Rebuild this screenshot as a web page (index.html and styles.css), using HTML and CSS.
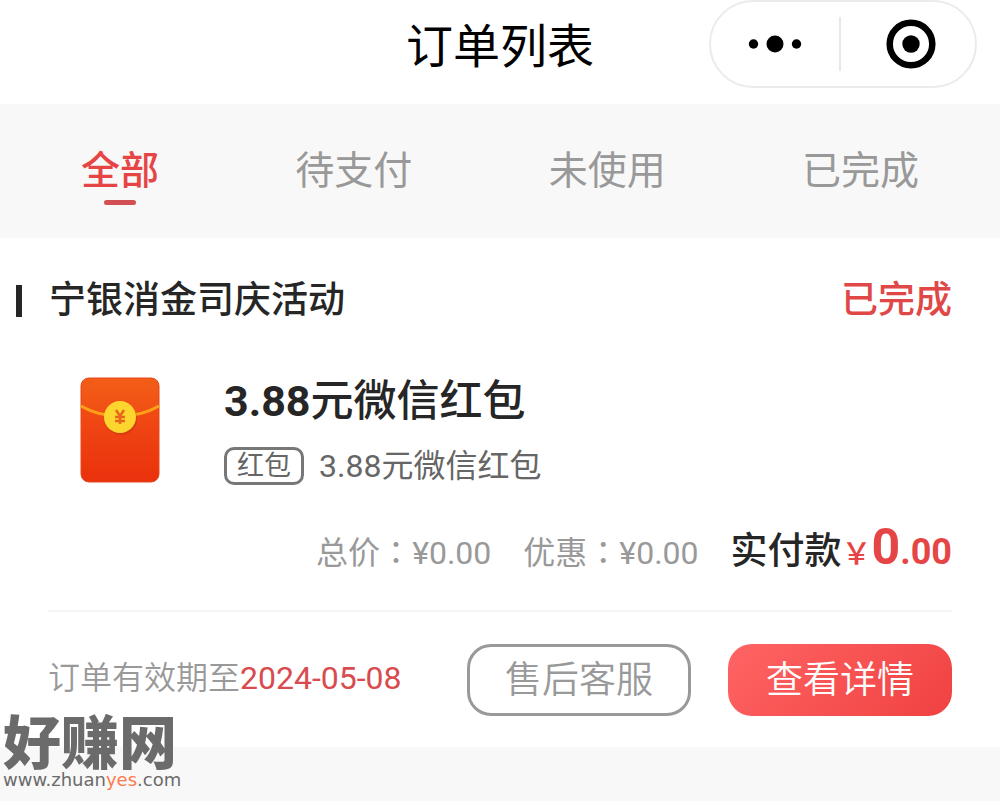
FILE: index.html
```html
<!DOCTYPE html>
<html lang="zh-CN">
<head>
<meta charset="utf-8">
<meta name="viewport" content="width=device-width, initial-scale=1">
<title>订单列表</title>
<link rel="stylesheet" href="styles.css">
</head>
<body>
<header class="topbar">
  <h1 class="topbar-title">订单列表</h1>
  <div class="capsule">
    <button class="capsule-btn capsule-more" type="button" aria-label="更多">
      <svg width="56" height="20" viewBox="0 0 56 20"><circle cx="6.500" cy="10" r="4.700"/><circle cx="28" cy="10" r="8.500"/><circle cx="49.500" cy="10" r="4.700"/></svg>
    </button>
    <button class="capsule-btn capsule-close" type="button" aria-label="关闭">
      <svg width="50" height="50" viewBox="0 0 50 50"><circle cx="25" cy="25" r="21.300" fill="none" stroke="#000" stroke-width="6.500"/><circle cx="25" cy="25" r="8.700"/></svg>
    </button>
  </div>
</header>

<nav class="tabs">
  <button class="tab tab-active" type="button">全部</button>
  <button class="tab" type="button">待支付</button>
  <button class="tab" type="button">未使用</button>
  <button class="tab" type="button">已完成</button>
</nav>

<main>
  <article class="order">
    <div class="order-head">
      <h2 class="order-title">宁银消金司庆活动</h2>
      <span class="order-status">已完成</span>
    </div>

    <div class="product">
      <svg class="product-pic" width="80" height="106" viewBox="0 0 80 106" aria-hidden="true">
        <defs>
          <linearGradient id="packet" x1="0" y1="0" x2="0" y2="1"><stop offset="0" stop-color="#f45a14"/><stop offset="0.500" stop-color="#ef4313"/><stop offset="1" stop-color="#ea310c"/></linearGradient>
          <linearGradient id="flap" x1="0" y1="0" x2="0" y2="1"><stop offset="0" stop-color="#f35d17"/><stop offset="1" stop-color="#f04e14"/></linearGradient>
        </defs>
        <rect x="1" y="1" width="78" height="104" rx="8" fill="url(#packet)" stroke="#e5481d"/>
        <path d="M9 2H71Q78 2 78 9V29Q61 38 40 38T2 29V9Q2 2 9 2Z" fill="url(#flap)"/>
        <path d="M1 29Q18 39 40 39T79 29" fill="none" stroke="#fda218" stroke-width="3"/>
        <circle cx="41" cy="42" r="16" fill="#bd3510" opacity="0.500"/>
        <circle cx="40" cy="40" r="16" fill="#fdd52f"/>
        <path d="M36 33L40 39L44 33M40 39V47M35 40H45M35 44H45" fill="none" stroke="#e7681b" stroke-width="2.500"/>
      </svg>
      <div class="product-info">
        <h3 class="product-name"><span class="amount">3.88</span>元微信红包</h3>
        <p class="product-desc"><span class="tag">红包</span><span>3.88元微信红包</span></p>
      </div>
    </div>

    <div class="totals">
      <span class="sum">总价<span class="colon" lang="zh-TW">：</span>¥0.00</span>
      <span class="sum">优惠<span class="colon" lang="zh-TW">：</span>¥0.00</span>
      <span class="paid">实付款<span class="paid-sign">￥</span><strong class="paid-int">0</strong><strong class="paid-dec">.00</strong></span>
    </div>

    <footer class="order-foot">
      <p class="expiry">订单有效期至<time class="expiry-date" datetime="2024-05-08">2024-05-08</time></p>
      <div class="actions">
        <button class="btn btn-plain" type="button">售后客服</button>
        <button class="btn btn-primary" type="button">查看详情</button>
      </div>
    </footer>
  </article>
</main>

<div class="watermark">
  <span class="watermark-name">好赚网</span>
  <span class="watermark-url">www.zhuan<span class="watermark-accent">yes</span>.com</span>
</div>
</body>
</html>
```
FILE: styles.css
```css
* {
  box-sizing: border-box;
}

body {
  margin: 0;
  min-height: 100vh;
  position: relative;
  background: #f8f8f8;
  color: #262626;
  font-family: Roboto, "Noto Sans CJK SC", sans-serif;
}

h1, h2, h3, p {
  margin: 0;
}

button {
  margin: 0;
  padding: 0;
  border: 0;
  background: none;
  color: inherit;
  font: inherit;
  cursor: pointer;
}

.topbar {
  display: grid;
  grid-template-columns: 1fr auto 1fr;
  height: 104px;
  padding-right: 23px;
  padding-left: 23px;
  background: #fff;
}

.topbar-title {
  grid-column: 2;
  color: #000;
  font-size: 47px;
  font-weight: 400;
  line-height: 94px;
}

.capsule {
  justify-self: end;
  display: flex;
  align-items: center;
  width: 268px;
  height: 88px;
  border: 2px solid #ebebeb;
  border-radius: 44px;
}

.capsule-btn {
  flex: 1 1 0;
  display: flex;
  align-items: center;
  justify-content: center;
  height: 54px;
}

.capsule-close {
  padding-left: 6px;
  border-left: 2px solid #e8e8e8;
}

.tabs {
  display: flex;
  justify-content: space-between;
  padding: 38px 81px 30px;
}

.tab {
  display: flex;
  flex-direction: column;
  align-items: center;
  height: 66px;
  color: #999;
  font-size: 39px;
  line-height: 58px;
}

.tab-active {
  color: #e64545;
  font-weight: 500;
}

.tab-active::after {
  content: "";
  width: 32px;
  height: 5px;
  border-radius: 3px;
  background: #d25053;
}

.order {
  padding: 36px 48px 31px;
  background: #fff;
}

.order-head {
  display: flex;
  align-items: center;
  justify-content: space-between;
  margin-left: -32px;
  line-height: 54px;
}

.order-title {
  display: flex;
  align-items: center;
  gap: 27px;
  font-size: 37px;
  font-weight: 500;
}

.order-title::before {
  content: "";
  width: 6px;
  height: 32px;
  background: #262626;
}

.order-status {
  color: #e04848;
  font-size: 37px;
  font-weight: 500;
}

.product {
  display: flex;
  align-items: center;
  gap: 64px;
  padding: 41px 32px 30px;
}

.product-pic {
  margin-top: 6px;
}

.product-name {
  font-size: 43px;
  font-weight: 500;
  line-height: 64px;
}

.amount,
.paid-int,
.paid-dec {
  font-weight: 700;
}

.product-desc {
  display: flex;
  align-items: center;
  gap: 15px;
  margin-top: 14px;
  color: #666;
  font-size: 32px;
  line-height: 38px;
}

.tag {
  padding: 0 10px;
  border: 3px solid #777;
  border-radius: 10px;
  font-size: 27px;
  line-height: 32px;
}

.totals {
  display: flex;
  align-items: baseline;
  justify-content: flex-end;
  gap: 32px;
  padding-bottom: 24px;
  border-bottom: 2px solid #f5f5f5;
  line-height: 64px;
}

.sum {
  color: #999;
  font-size: 32px;
}

.colon {
  font-family: "Noto Sans CJK TC", sans-serif;
}

.paid {
  font-size: 37px;
  font-weight: 500;
}

.paid-sign,
.paid-int,
.paid-dec {
  color: #e64545;
}

.paid-sign {
  font-size: 30px;
}

.paid-int {
  font-size: 50px;
}

.paid-dec {
  font-size: 36px;
}

.order-foot {
  display: flex;
  align-items: center;
  justify-content: space-between;
  padding-top: 32px;
}

.expiry {
  color: #999;
  font-size: 32px;
  font-weight: 350;
  line-height: 40px;
  padding-bottom: 4px;
}

.expiry-date {
  color: #d84b4f;
  font-weight: 400;
}

.actions {
  display: flex;
  gap: 37px;
}

.btn {
  width: 224px;
  height: 72px;
  padding-bottom: 6px;
  border-radius: 24px;
  font-size: 37px;
  font-weight: 350;
}

.btn-plain {
  border: 3px solid #999;
  color: #999;
}

.btn-primary {
  background: linear-gradient(135deg, #ff6464, #f04141);
  color: #fff;
}

.watermark {
  position: absolute;
  top: 717px;
  left: 3px;
  display: flex;
  flex-direction: column;
  color: #6b6b6b;
}

.watermark-name {
  font-size: 58px;
  font-weight: 900;
  line-height: 54px;
}

.watermark-url {
  font-family: "DejaVu Sans", sans-serif;
  font-size: 18px;
  line-height: 18px;
}

.watermark-accent {
  color: #ff7b4d;
}
```
